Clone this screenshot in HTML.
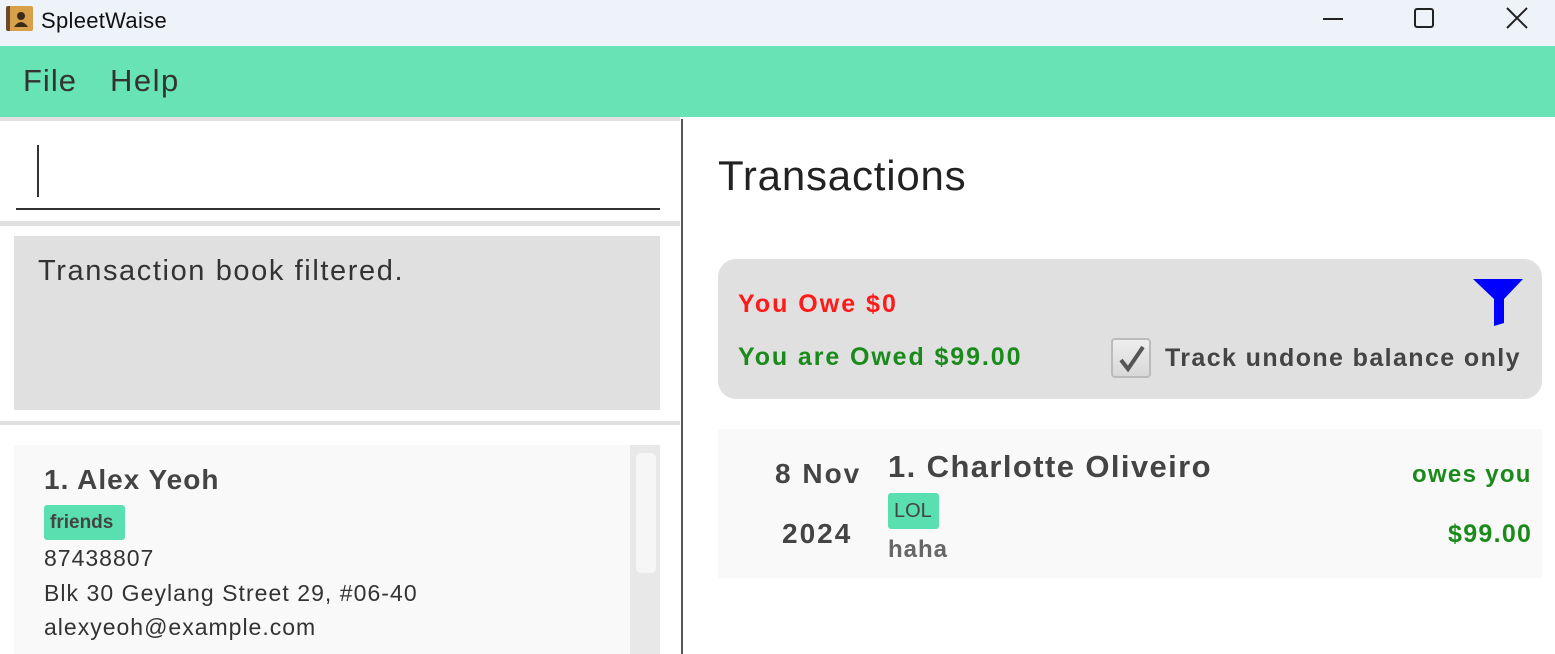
<!DOCTYPE html>
<html><head><meta charset="utf-8"><style>
*{margin:0;padding:0;box-sizing:border-box}
body{width:1555px;height:654px;overflow:hidden;background:#fff;font-family:"Liberation Sans","DejaVu Sans",sans-serif;position:relative;color:#444}
.a{position:absolute;white-space:nowrap}
.b{font-weight:bold}
</style></head><body>
<div class="a" style="left:0;top:0;width:1555px;height:46px;background:#eef2f9"></div>
<div class="a" style="left:6px;top:6px;width:27px;height:25px;background:#d9a04a;border-left:4px solid #6b4a2a;border-radius:2px"></div>
<svg class="a" style="left:12px;top:9px" width="18" height="20"><circle cx="9" cy="7" r="4" fill="#3a2a1a"/><path d="M2 18 Q9 8 16 18Z" fill="#3a2a1a"/></svg>
<div class="a" style="left:41px;top:8px;font-size:22px;color:#111;letter-spacing:0.3px">SpleetWaise</div>
<div class="a" style="left:1323px;top:18px;width:20px;height:2px;background:#222"></div>
<div class="a" style="left:1414px;top:8px;width:20px;height:20px;border:2px solid #222;border-radius:3px"></div>
<svg class="a" style="left:1506px;top:7px" width="22" height="22"><path d="M1 1L21 21M21 1L1 21" stroke="#222" stroke-width="2"/></svg>
<div class="a" style="left:0;top:46px;width:1555px;height:71px;background:#68e3b6"></div>
<div class="a" style="left:23px;top:63px;font-size:31px;color:#333;letter-spacing:1px">File</div>
<div class="a" style="left:110px;top:63px;font-size:31px;color:#333;letter-spacing:1.5px">Help</div>
<div class="a" style="left:0;top:117px;width:680px;height:4px;background:#e0e0e0"></div>
<div class="a" style="left:37px;top:145px;width:2px;height:52px;background:#333"></div>
<div class="a" style="left:16px;top:208px;width:644px;height:2px;background:#333"></div>
<div class="a" style="left:0;top:221px;width:680px;height:5px;background:#e0e0e0"></div>
<div class="a" style="left:14px;top:236px;width:646px;height:174px;background:#e0e0e0"></div>
<div class="a" style="left:38px;top:255px;font-size:29px;color:#333;letter-spacing:1.6px">Transaction book filtered.</div>
<div class="a" style="left:0;top:421px;width:680px;height:4px;background:#e0e0e0"></div>
<div class="a" style="left:14px;top:445px;width:616px;height:209px;background:#f9f9f9"></div>
<div class="a" style="left:630px;top:445px;width:30px;height:209px;background:#e8e8e8"></div>
<div class="a" style="left:636px;top:453px;width:20px;height:120px;background:#f6f6f6;border-radius:5px"></div>
<div class="a b" style="left:44px;top:464px;font-size:28px;color:#444;letter-spacing:1px">1. Alex Yeoh</div>
<div class="a" style="left:44px;top:505px;width:81px;height:35px;background:#5ae0b0;border-radius:3px"></div>
<div class="a b" style="left:50px;top:512px;font-size:19px;color:#444">friends</div>
<div class="a" style="left:44px;top:545px;font-size:23px;color:#333;letter-spacing:1px">87438807</div>
<div class="a" style="left:44px;top:580px;font-size:23px;color:#333;letter-spacing:1.05px">Blk 30 Geylang Street 29, #06-40</div>
<div class="a" style="left:44px;top:614px;font-size:23px;color:#333;letter-spacing:1px">alexyeoh@example.com</div>
<div class="a" style="left:681px;top:119px;width:2px;height:535px;background:#555"></div>
<div class="a" style="left:718px;top:152px;font-size:42px;color:#222;letter-spacing:0.8px">Transactions</div>
<div class="a" style="left:718px;top:259px;width:824px;height:140px;background:#e0e0e0;border-radius:18px"></div>
<div class="a b" style="left:738px;top:290px;font-size:25px;color:#ff1a1a;letter-spacing:2px">You Owe $0</div>
<div class="a b" style="left:738px;top:343px;font-size:25px;color:#1a8a1a;letter-spacing:1.9px">You are Owed $99.00</div>
<svg class="a" style="left:1473px;top:279px" width="50" height="48"><path d="M0 0H50L31 20V44L21 47V20Z" fill="#0000ff"/></svg>
<div class="a" style="left:1111px;top:338px;width:40px;height:40px;border:2px solid #bbb;border-radius:4px;background:linear-gradient(#eee,#d8d8d8)"></div>
<svg class="a" style="left:1116px;top:343px" width="32" height="32"><path d="M5 17L12 26L27 4" stroke="#555" stroke-width="4" fill="none"/></svg>
<div class="a b" style="left:1165px;top:344px;font-size:25px;color:#444;letter-spacing:1.4px">Track undone balance only</div>
<div class="a" style="left:718px;top:429px;width:824px;height:149px;background:#f9f9f9"></div>
<div class="a b" style="left:775px;top:458px;font-size:28px;color:#444;letter-spacing:2px">8 Nov</div>
<div class="a b" style="left:782px;top:518px;font-size:28px;color:#444;letter-spacing:2px">2024</div>
<div class="a b" style="left:888px;top:449px;font-size:31px;color:#444;letter-spacing:1.4px">1. Charlotte Oliveiro</div>
<div class="a" style="left:888px;top:493px;width:51px;height:36px;background:#5ae0b0;border-radius:3px"></div>
<div class="a" style="left:894px;top:500px;font-size:20px;color:#444">LOL</div>
<div class="a b" style="left:888px;top:536px;font-size:24px;color:#666;letter-spacing:1px">haha</div>
<div class="a b" style="left:1412px;top:461px;font-size:24px;color:#1a8a1a;letter-spacing:1.3px">owes you</div>
<div class="a b" style="left:1448px;top:520px;font-size:25px;color:#1a8a1a;letter-spacing:1.3px">$99.00</div>
</body></html>
